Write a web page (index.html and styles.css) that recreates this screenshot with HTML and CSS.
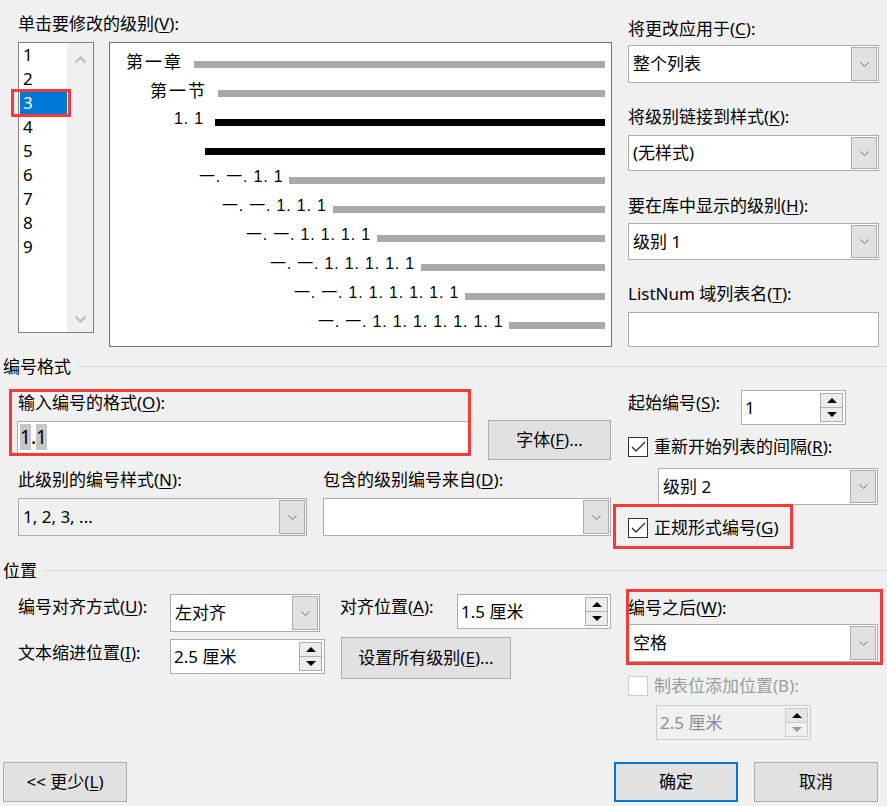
FILE: index.html
```html
<!DOCTYPE html>
<html lang="zh-CN">
<head>
<meta charset="utf-8">
<title>定义新多级列表</title>
<link rel="stylesheet" href="styles.css">
</head>
<body>
<div class="dialog">
  <div class="top">
    <div class="top-left">
      <div class="lbl">单击要修改的级别(<u>V</u>):</div>
      <div class="top-row">
        <div class="levels">
          <ul class="level-items">
            <li>1</li><li>2</li><li class="sel">3</li><li>4</li><li>5</li><li>6</li><li>7</li><li>8</li><li>9</li>
          </ul>
          <div class="level-scroll">
            <svg width="13" height="9" viewBox="0 0 13 9"><polyline points="1.5,7.5 6.5,2.5 11.5,7.5" fill="none" stroke="#c4c4c4" stroke-width="2.6"/></svg>
            <svg width="13" height="9" viewBox="0 0 13 9"><polyline points="1.5,1.5 6.5,6.5 11.5,1.5" fill="none" stroke="#c4c4c4" stroke-width="2.6"/></svg>
          </div>
        </div>
        <div class="preview">
          <div class="pv r1"><span class="pv-num pv-cjk">第一章</span><span class="bar"></span></div>
          <div class="pv r2"><span class="pv-num pv-cjk">第一节</span><span class="bar"></span></div>
          <div class="pv r3"><span class="pv-num">1. 1</span><span class="bar dark"></span></div>
          <div class="pv r4"><span class="bar dark"></span></div>
          <div class="pv r5"><span class="pv-num">一. 一. 1. 1</span><span class="bar"></span></div>
          <div class="pv r6"><span class="pv-num">一. 一. 1. 1. 1</span><span class="bar"></span></div>
          <div class="pv r7"><span class="pv-num">一. 一. 1. 1. 1. 1</span><span class="bar"></span></div>
          <div class="pv r8"><span class="pv-num">一. 一. 1. 1. 1. 1. 1</span><span class="bar"></span></div>
          <div class="pv r9"><span class="pv-num">一. 一. 1. 1. 1. 1. 1. 1</span><span class="bar"></span></div>
          <div class="pv r10"><span class="pv-num">一. 一. 1. 1. 1. 1. 1. 1. 1</span><span class="bar"></span></div>
        </div>
      </div>
    </div>
    <div class="top-right">
      <div class="lbl">将更改应用于(<u>C</u>):</div>
      <div class="combo apply-combo"><span class="combo-text">整个列表</span><span class="combo-btn"><svg width="9" height="5" viewBox="0 0 9 5"><polyline points="0.5,0.5 4.5,4.5 8.5,0.5" fill="none" stroke="#707070" stroke-width="1"/></svg></span></div>
      <div class="lbl link-label">将级别链接到样式(<u>K</u>):</div>
      <div class="combo style-combo"><span class="combo-text">(无样式)</span><span class="combo-btn"><svg width="9" height="5" viewBox="0 0 9 5"><polyline points="0.5,0.5 4.5,4.5 8.5,0.5" fill="none" stroke="#707070" stroke-width="1"/></svg></span></div>
      <div class="lbl gallery-label">要在库中显示的级别(<u>H</u>):</div>
      <div class="combo gallery-combo"><span class="combo-text">级别 1</span><span class="combo-btn"><svg width="9" height="5" viewBox="0 0 9 5"><polyline points="0.5,0.5 4.5,4.5 8.5,0.5" fill="none" stroke="#707070" stroke-width="1"/></svg></span></div>
      <div class="lbl listnum-label">ListNum 域列表名(<u>T</u>):</div>
      <div class="textbox listnum-box"></div>
    </div>
  </div>

  <div class="section-head">编号格式</div>
  <div class="mid">
    <div class="mid-left">
      <div class="lbl fmt-label">输入编号的格式(<u>O</u>):</div>
      <div class="fmt-row">
        <div class="textbox fmt-input"><span class="hl">1</span>.<span class="hl">1</span></div>
        <div class="btn font-btn">字体(<u>F</u>)...</div>
      </div>
      <div class="mid-lbl-row">
        <div class="lbl style-label">此级别的编号样式(<u>N</u>):</div>
        <div class="lbl">包含的级别编号来自(<u>D</u>):</div>
      </div>
      <div class="mid-combo-row">
        <div class="combo numstyle-combo readonly"><span class="combo-text">1, 2, 3, ...</span><span class="combo-btn"><svg width="9" height="5" viewBox="0 0 9 5"><polyline points="0.5,0.5 4.5,4.5 8.5,0.5" fill="none" stroke="#707070" stroke-width="1"/></svg></span></div>
        <div class="combo include-combo"><span class="combo-text"></span><span class="combo-btn"><svg width="9" height="5" viewBox="0 0 9 5"><polyline points="0.5,0.5 4.5,4.5 8.5,0.5" fill="none" stroke="#707070" stroke-width="1"/></svg></span></div>
      </div>
    </div>
    <div class="mid-right">
      <div class="start-row">
        <div class="lbl start-label">起始编号(<u>S</u>):</div>
        <div class="spin start-spin"><span class="spin-text">1</span><span class="spin-btns"><span class="sb"><i class="tri-up"></i></span><span class="sb"><i class="tri-down"></i></span></span></div>
      </div>
      <div class="check-row restart-row">
        <span class="cb"><svg width="15" height="12" viewBox="0 0 15 12"><polyline points="1,6 5,10 14,1" fill="none" stroke="#333" stroke-width="1.4"/></svg></span>
        <span class="lbl cb-label">重新开始列表的间隔(<u>R</u>):</span>
      </div>
      <div class="combo restart-combo"><span class="combo-text">级别 2</span><span class="combo-btn"><svg width="9" height="5" viewBox="0 0 9 5"><polyline points="0.5,0.5 4.5,4.5 8.5,0.5" fill="none" stroke="#707070" stroke-width="1"/></svg></span></div>
      <div class="check-row legal-row">
        <span class="cb"><svg width="15" height="12" viewBox="0 0 15 12"><polyline points="1,6 5,10 14,1" fill="none" stroke="#333" stroke-width="1.4"/></svg></span>
        <span class="lbl cb-label">正规形式编号(<u>G</u>)</span>
      </div>
    </div>
  </div>

  <div class="section-head">位置</div>
  <div class="pos">
    <div class="pos-left">
      <div class="pos-row1">
        <div class="lbl pos-label">编号对齐方式(<u>U</u>):</div>
        <div class="combo align-combo"><span class="combo-text">左对齐</span><span class="combo-btn"><svg width="9" height="5" viewBox="0 0 9 5"><polyline points="0.5,0.5 4.5,4.5 8.5,0.5" fill="none" stroke="#707070" stroke-width="1"/></svg></span></div>
        <div class="lbl at-label">对齐位置(<u>A</u>):</div>
        <div class="spin at-spin"><span class="spin-text">1.5 厘米</span><span class="spin-btns"><span class="sb"><i class="tri-up"></i></span><span class="sb"><i class="tri-down"></i></span></span></div>
      </div>
      <div class="pos-row2">
        <div class="lbl pos-label indent-label">文本缩进位置(<u>I</u>):</div>
        <div class="spin indent-spin"><span class="spin-text">2.5 厘米</span><span class="spin-btns"><span class="sb"><i class="tri-up"></i></span><span class="sb"><i class="tri-down"></i></span></span></div>
        <div class="btn setall-btn">设置所有级别(<u>E</u>)...</div>
      </div>
    </div>
    <div class="pos-right">
      <div class="lbl after-label">编号之后(<u>W</u>):</div>
      <div class="combo after-combo"><span class="combo-text">空格</span><span class="combo-btn"><svg width="9" height="5" viewBox="0 0 9 5"><polyline points="0.5,0.5 4.5,4.5 8.5,0.5" fill="none" stroke="#707070" stroke-width="1"/></svg></span></div>
      <div class="check-row tab-row">
        <span class="cb disabled"></span>
        <span class="lbl cb-label disabled-text">制表位添加位置(B):</span>
      </div>
      <div class="spin tab-spin disabled"><span class="spin-text">2.5 厘米</span><span class="spin-btns"><span class="sb"><i class="tri-up"></i></span><span class="sb"><i class="tri-down"></i></span></span></div>
    </div>
  </div>

  <div class="footer">
    <div class="btn foot-btn">&lt;&lt; 更少(<u>L</u>)</div>
    <div class="btn foot-btn ok-btn">确定</div>
    <div class="btn foot-btn cancel-btn">取消</div>
  </div>

  <div class="mark m-level"></div>
  <div class="mark m-format"></div>
  <div class="mark m-legal"></div>
  <div class="mark m-after"></div>
</div>
</body>
</html>
```

FILE: styles.css
```css
* { box-sizing: border-box; }
html, body { margin: 0; padding: 0; }
body {
  background: #f0f0f0;
  font-family: "Noto Sans", "Noto Sans CJK SC", sans-serif;
  font-size: 17px;
  line-height: 20px;
  color: #000;
}
.dialog { position: relative; width: 887px; height: 806px; overflow: hidden; }
u { text-decoration: underline; text-underline-offset: 2px; text-decoration-thickness: 1px; }
.lbl { height: 20px; white-space: nowrap; }

/* top */
.top { display: flex; height: 357px; }
.top-left { width: 612px; padding: 14px 0 0 18px; }
.top-row { display: flex; margin-top: 8px; }
.levels { display: flex; width: 76px; height: 291px; border: 1px solid #828282; background: #fff; }
.level-items { list-style: none; margin: 0; padding: 0 0 0 1px; width: 48px; }
.level-items li { height: 24px; line-height: 24px; padding-left: 3px; }
.level-items li.sel { background: #0078d7; color: #fff; }
.level-scroll { flex: 1; background: #f0f0f0; display: flex; flex-direction: column; justify-content: space-between; align-items: center; padding: 12px 0 8px; }

.preview { margin-left: 15px; width: 503px; height: 305px; border: 1px solid #707070; background: #fff; padding: 3px 6px 0 0; }
.pv { display: flex; align-items: center; height: 29px; white-space: nowrap; }
.pv-num { flex: none; font-family: "Liberation Sans", "Noto Sans CJK SC", sans-serif; font-size: 16px; letter-spacing: 0.8px; }
.pv-cjk { font-family: "Noto Sans CJK SC", sans-serif; font-size: 17px; letter-spacing: 2px; }
.pv .bar { flex: 1; height: 7px; background: #a9a9a9; margin-top: 8px; }
.pv .bar.dark { background: #000; }
.r1 { padding-left: 16px; } .r1 .pv-num { width: 68px; }
.r2 { padding-left: 40px; } .r2 .pv-num { width: 68px; }
.r3 { padding-left: 64px; } .r3 .pv-num { width: 41px; }
.r4 { padding-left: 95px; }
.r5 { padding-left: 89px; } .r5 .pv-num { width: 90px; }
.r6 { padding-left: 112px; } .r6 .pv-num { width: 111px; }
.r7 { padding-left: 136px; } .r7 .pv-num { width: 131px; }
.r8 { padding-left: 160px; } .r8 .pv-num { width: 151px; }
.r9 { padding-left: 184px; } .r9 .pv-num { width: 171px; }
.r10 { padding-left: 208px; } .r10 .pv-num { width: 191px; }

.top-right { width: 251px; margin-left: 16px; padding-top: 19px; }
.apply-combo { margin-top: 6px; height: 38px; }
.link-label { margin-top: 24px; }
.style-combo { margin-top: 8px; height: 36px; }
.gallery-label { margin-top: 25px; }
.gallery-combo { margin-top: 7px; height: 37px; }
.listnum-label { margin-top: 24px; }
.listnum-box { margin-top: 8px; height: 35px; }

/* controls */
.combo { display: flex; border: 1px solid #adadad; background: #fff; padding: 1px; }
.combo.readonly { background: #f0f0f0; }
.combo-text { flex: 1; display: flex; align-items: center; padding-left: 3px; white-space: nowrap; }
.combo-btn { flex: none; width: 26px; background: #e1e1e1; border: 1px solid #adadad; display: flex; align-items: center; justify-content: center; }
.textbox { border: 1px solid #adadad; background: #fff; }

.spin { display: flex; border: 1px solid #adadad; background: #fff; padding: 2px; }
.spin-text { flex: 1; display: flex; align-items: center; padding-left: 1px; white-space: nowrap; }
.spin-btns { flex: none; width: 23px; display: flex; flex-direction: column; }
.sb { flex: 1; background: #ececec; border: 1px solid #adadad; display: flex; align-items: center; justify-content: center; }
.sb + .sb { border-top: none; }
.tri-up { width: 0; height: 0; border-left: 5px solid transparent; border-right: 5px solid transparent; border-bottom: 5px solid #000; }
.tri-down { width: 0; height: 0; border-left: 5px solid transparent; border-right: 5px solid transparent; border-top: 5px solid #000; }
.spin.disabled { background: #f0f0f0; border-color: #cccccc; color: #8d8d8d; }
.spin.disabled .sb { background: #f0f0f0; border-color: #cccccc; }
.spin.disabled .sb:first-child { background: #e5e5e5; }
.spin.disabled .tri-down { border-top-color: #9a9a9a; }

.btn { background: #e1e1e1; border: 1px solid #adadad; display: flex; align-items: center; justify-content: center; white-space: nowrap; }

.check-row { display: flex; align-items: center; height: 20px; }
.cb { flex: none; width: 20px; height: 20px; border: 1px solid #333; background: #fff; display: flex; align-items: center; justify-content: center; }
.cb.disabled { border-color: #cccccc; }
.cb-label { margin-left: 6px; }
.disabled-text { color: #9d9d9d; }

/* section heads */
.section-head { display: flex; align-items: center; height: 20px; padding-left: 3px; white-space: nowrap; }
.section-head::after { content: ""; flex: 1; height: 1px; background: #dcdcdc; margin-left: 6px; margin-top: -1px; }

/* numbering format */
.mid { display: flex; height: 184px; }
.mid-left { width: 612px; padding-top: 16px; }
.fmt-label { margin-left: 18px; }
.fmt-row { display: flex; margin-top: 7px; align-items: flex-start; }
.fmt-input { margin: 1px 0 0 17px; width: 453px; height: 34px; font-size: 19px; line-height: 26px; padding: 2px 0 0 2px; }
.hl { background: #c6c6c6; }
.font-btn { margin-left: 18px; width: 123px; height: 40px; }
.mid-lbl-row { display: flex; margin-top: 10px; }
.style-label { margin-left: 18px; width: 305px; }
.mid-combo-row { display: flex; margin-top: 8px; }
.numstyle-combo { margin-left: 18px; width: 289px; height: 38px; }
.include-combo { margin-left: 16px; width: 288px; height: 38px; }

.mid-right { flex: 1; padding: 13px 0 0 16px; }
.start-row { display: flex; align-items: flex-start; }
.start-label { width: 113px; margin-top: 3px; }
.start-spin { width: 105px; height: 35px; }
.restart-row { margin-top: 12px; }
.restart-combo { margin: 11px 0 0 30px; width: 220px; height: 37px; }
.legal-row { margin-top: 13px; }

/* position */
.pos { display: flex; height: 181px; }
.pos-left { width: 612px; padding: 13px 0 0 18px; }
.pos-row1 { display: flex; align-items: flex-start; }
.pos-label { width: 152px; margin-top: 3px; }
.align-combo { width: 150px; height: 38px; }
.at-label { margin: 3px 0 0 20px; width: 117px; }
.at-spin { width: 154px; height: 35px; }
.pos-row2 { display: flex; align-items: flex-start; margin-top: 5px; }
.indent-label { margin-top: 6px; }
.indent-spin { margin-top: 2px; width: 155px; height: 35px; }
.setall-btn { margin-left: 16px; width: 170px; height: 42px; }

.pos-right { flex: 1; padding: 17px 0 0 16px; }
.after-combo { margin-top: 6px; width: 250px; height: 38px; }
.tab-row { margin-top: 14px; }
.tab-spin { margin: 9px 0 0 28px; width: 155px; height: 35px; }

/* footer */
.footer { display: flex; padding-left: 3px; }
.foot-btn { width: 124px; height: 40px; }
.ok-btn { margin-left: 487px; border: 2px solid #0078d7; }
.cancel-btn { margin-left: 16px; }

/* red annotation boxes */
.mark { position: absolute; border: 3px solid #f33b3b; pointer-events: none; }
.m-level { left: 11px; top: 89px; width: 60px; height: 28px; }
.m-format { left: 9px; top: 389px; width: 462px; height: 67px; }
.m-legal { left: 613px; top: 504px; width: 180px; height: 45px; }
.m-after { left: 626px; top: 589px; width: 257px; height: 76px; }
```
